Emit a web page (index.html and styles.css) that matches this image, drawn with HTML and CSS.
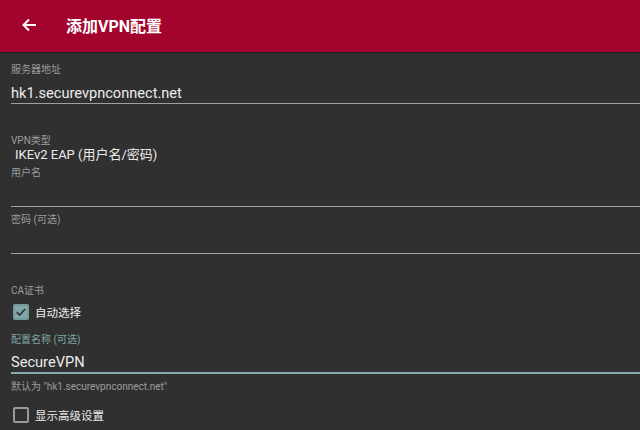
FILE: index.html
```html
<!DOCTYPE html>
<html>
  <head>
    <meta charset="utf-8">
    <title>添加VPN配置</title>
    <link rel="stylesheet" href="styles.css">
  </head>
  <body>
    <div class="toolbar">
      <svg class="back" width="16" height="16" viewBox="0 0 16 16">
        <path d="M15 8H2.5M8 2.5L2.5 8L8 13.5" fill="none" stroke="#fff" stroke-width="2"/>
      </svg>
      <span class="title">添加VPN配置</span>
    </div>

    <div class="form">
      <div class="label first">服务器地址</div>
      <div class="input">hk1.securevpnconnect.net</div>

      <div class="label section">VPN类型</div>
      <div class="spinner">IKEv2 EAP (用户名/密码)</div>
      <div class="label tight">用户名</div>
      <div class="input"></div>

      <div class="label">密码 (可选)</div>
      <div class="input"></div>

      <div class="label section">CA证书</div>
      <div class="check-row first-check">
        <span class="box checked">
          <svg width="12" height="12" viewBox="0 0 12 12">
            <path d="M1.8 6.2L4.6 9L10.2 3" fill="none" stroke="#303030" stroke-width="1.7"/>
          </svg>
        </span>
        <span>自动选择</span>
      </div>

      <div class="label focused">配置名称 (可选)</div>
      <div class="input active">SecureVPN</div>
      <div class="label hint">默认为 "hk1.securevpnconnect.net"</div>

      <div class="check-row">
        <span class="box"></span>
        <span>显示高级设置</span>
      </div>
    </div>
  </body>
</html>
```

FILE: styles.css
```css
body {
  margin: 0;
  background-color: #303030;
  font-family: Roboto, "Noto Sans CJK SC", sans-serif;
  color: #ececec;
}

.toolbar {
  height: 52px;
  background-color: #a3042d;
  display: flex;
  align-items: center;
  box-shadow: 0 1px 1px rgba(0, 0, 0, 0.35);
}

.back {
  margin-left: 21px;
  margin-bottom: 2px;
}

.title {
  margin-left: 29px;
  margin-bottom: 2px;
  font-size: 16px;
  font-weight: 700;
  color: #fff;
}

.form {
  padding-left: 11px;
}

.label {
  font-size: 10px;
  line-height: 14px;
  color: #9c9c9c;
  margin-top: 6px;
}

.label.first {
  margin-top: 11px;
}

.label.section {
  margin-top: 30px;
}

.label.tight {
  margin-top: 4px;
}

.label.focused {
  color: #7fa5a7;
  margin-top: 9px;
}

.input {
  height: 20px;
  line-height: 20px;
  font-size: 14.6px;
  margin-top: 6px;
  border-bottom: 1px solid #a0a0a0;
}

.input.active {
  margin-top: 5px;
  border-bottom: 2px solid #86adaf;
}

.spinner {
  font-size: 13px;
  line-height: 14px;
  padding-left: 4px;
}

.check-row {
  display: flex;
  align-items: center;
  height: 24px;
  margin-top: 9px;
  font-size: 11.5px;
}

.check-row.first-check {
  margin-top: 2px;
}

.box {
  width: 12px;
  height: 12px;
  border: 2px solid #9a9a9a;
  border-radius: 2px;
  margin-left: 2px;
  margin-right: 6px;
  display: flex;
  align-items: center;
  justify-content: center;
}

.box.checked {
  background-color: #80a8aa;
  border-color: #76999b;
}

.box svg {
  flex-shrink: 0;
}
```
